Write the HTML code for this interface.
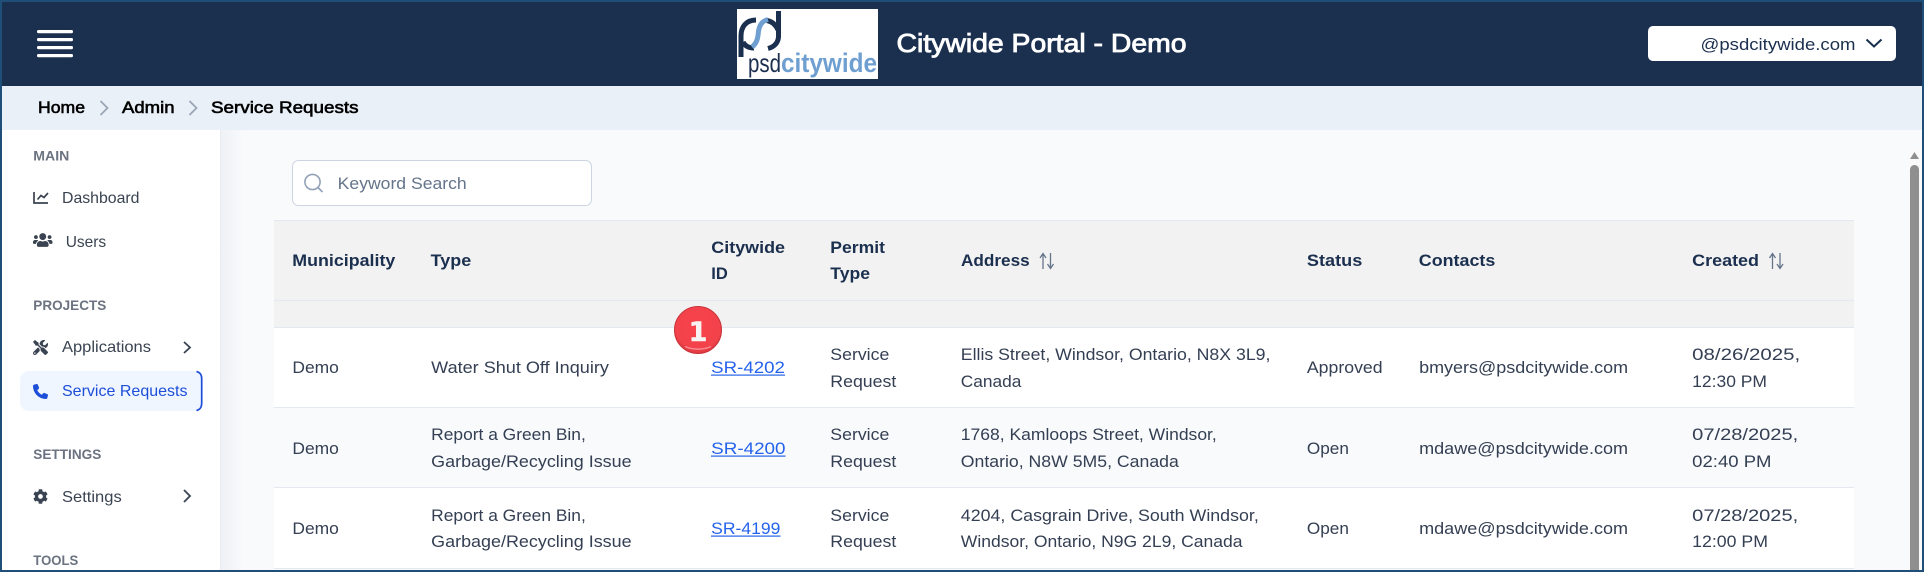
<!DOCTYPE html>
<html lang="en"><head><meta charset="utf-8"><title>Citywide Portal - Demo</title>
<style>
html,body{margin:0;padding:0;width:1924px;height:572px;overflow:hidden;background:#1f4e79}
svg{display:block;position:absolute;left:0;top:0}
text{font-family:"Liberation Sans",sans-serif;white-space:pre}
.c{font-size:17px;fill:#343f53}
.h{font-size:17px;font-weight:700;fill:#1b2f4e}
.l{font-size:17px;fill:#2563eb}
.n{font-size:16px;fill:#3a4351}
.s{font-size:14px;font-weight:700;fill:#6b7280}
.b{font-size:17px;fill:#000;stroke:#000;stroke-width:.6px}
</style></head><body>
<svg width="1924" height="572" viewBox="0 0 1924 572" xmlns="http://www.w3.org/2000/svg">
<defs>
<linearGradient id="sh" x1="0" x2="1" y1="0" y2="0"><stop offset="0" stop-color="#eef1f5"/><stop offset="1" stop-color="#f8fafc"/></linearGradient>
<radialGradient id="rd" cx=".5" cy=".42" r=".6"><stop offset="0" stop-color="#f9444c"/><stop offset=".8" stop-color="#f2424a"/><stop offset="1" stop-color="#d8363e"/></radialGradient>
</defs>
<!-- frame -->
<rect width="1924" height="572" fill="#1f4e79"/>
<!-- header -->
<rect x="2" y="2" width="1920" height="84" fill="#1b2f4e"/>
<g fill="#fff"><rect x="37" y="30" width="36" height="3.2" rx="1.5"/><rect x="37" y="38" width="36" height="3.2" rx="1.5"/><rect x="37" y="46" width="36" height="3.2" rx="1.5"/><rect x="37" y="54" width="36" height="3.2" rx="1.5"/></g>
<!-- logo -->
<rect x="737" y="9" width="141" height="70" fill="#fff"/>
<g fill="none" stroke-width="5">
<path d="M756 20C746 20 741 27 741 36V57" stroke="#1b2f4e"/>
<path d="M743 42C745 46 749 48 754 48" stroke="#1b2f4e"/>
<path d="M778.5 11V37C778 43 774 47 768 48.5" stroke="#1b2f4e"/>
<path d="M778 30C776 25 772 21.500 767 20.500" stroke="#1b2f4e"/>
<path d="M768 19.500C762 21 759.500 25 758.500 31C758 38 757 43 752 47" stroke="#6f9fd1"/>
</g>
<text x="748" y="72" textLength="33" lengthAdjust="spacingAndGlyphs" style="font-size:26px;fill:#1b2f4e">psd</text>
<text x="781" y="72" textLength="96" lengthAdjust="spacingAndGlyphs" style="font-size:27px;font-weight:700;fill:#6f9fd1">citywide</text>
<text x="896.5" y="52" textLength="290" lengthAdjust="spacingAndGlyphs" style="font-size:26px;fill:#fff;stroke:#fff;stroke-width:.85px">Citywide Portal - Demo</text>
<!-- user -->
<rect x="1648" y="26" width="248" height="35" rx="5" fill="#fff"/>
<text x="1700.5" y="50" textLength="155" lengthAdjust="spacingAndGlyphs" style="font-size:17px;fill:#1b2f4e">@psdcitywide.com</text>
<path d="M1866.5 39.5L1874 46.5L1881.5 39.5" fill="none" stroke="#1b2f4e" stroke-width="2"/>
<!-- breadcrumb -->
<rect x="2" y="86" width="1920" height="44" fill="#e9f0f8"/>
<text class="b" x="38" y="113" textLength="47" lengthAdjust="spacingAndGlyphs">Home</text>
<path d="M100.5 101L107.5 108L100.5 115" fill="none" stroke="#9aa5b5" stroke-width="1.8"/>
<text class="b" x="122" y="113" textLength="52.5" lengthAdjust="spacingAndGlyphs">Admin</text>
<path d="M189.5 101L196.5 108L189.5 115" fill="none" stroke="#9aa5b5" stroke-width="1.8"/>
<text class="b" x="211" y="113" textLength="147.5" lengthAdjust="spacingAndGlyphs">Service Requests</text>
<!-- main bg -->
<rect x="220" y="130" width="1702" height="440" fill="#f8fafc"/>
<rect x="221" y="130" width="22" height="440" fill="url(#sh)"/>
<!-- sidebar -->
<rect x="2" y="130" width="218" height="440" fill="#fff"/>
<rect x="220" y="130" width="1" height="440" fill="#e8ebf0"/>
<text class="s" x="33.3" y="160.5" textLength="36" lengthAdjust="spacingAndGlyphs">MAIN</text>
<path d="M34 192V203H48M37.5 199.5L41 195.5L44 197.5L48 193" fill="none" stroke="#3a4351" stroke-width="1.7"/>
<text class="n" x="62" y="203" textLength="77.5" lengthAdjust="spacingAndGlyphs">Dashboard</text>
<svg x="33" y="232" width="19.5" height="16" viewBox="0 0 640 512"><path fill="#3a4351" d="M96 224c35.3 0 64-28.7 64-64s-28.7-64-64-64-64 28.7-64 64 28.7 64 64 64zm448 0c35.3 0 64-28.7 64-64s-28.7-64-64-64-64 28.7-64 64 28.7 64 64 64zm32 32h-64c-17.6 0-33.5 7.1-45.1 18.6 40.3 22.1 68.9 62 75.1 109.4h66c17.7 0 32-14.3 32-32v-32c0-35.3-28.7-64-64-64zm-256 0c61.9 0 112-50.1 112-112S381.9 32 320 32 208 82.1 208 144s50.1 112 112 112zm76.8 32h-8.3c-20.8 10-43.9 16-68.5 16s-47.6-6-68.5-16h-8.3C179.6 288 128 339.6 128 403.2V432c0 26.5 21.5 48 48 48h288c26.5 0 48-21.5 48-48v-28.8c0-63.6-51.6-115.2-115.2-115.2zm-223.7-13.4C161.5 263.1 145.6 256 128 256H64c-35.3 0-64 28.7-64 64v32c0 17.7 14.3 32 32 32h65.9c6.3-47.4 34.9-87.3 75.2-109.4z"/></svg>
<text class="n" x="65.7" y="247" textLength="40.5" lengthAdjust="spacingAndGlyphs">Users</text>
<text class="s" x="33.3" y="310" textLength="73" lengthAdjust="spacingAndGlyphs">PROJECTS</text>
<svg x="33" y="340" width="15" height="15" viewBox="0 0 512 512"><path fill="#3a4351" d="M501.1 395.7L384 278.6c-23.1-23.1-57.6-27.6-85.4-13.9L192 158.1V96L64 0 0 64l96 128h62.1l106.6 106.6c-13.6 27.8-9.2 62.3 13.9 85.4l117.1 117.1c14.6 14.6 38.2 14.6 52.7 0l52.7-52.7c14.5-14.6 14.5-38.2 0-52.7zM331.7 225c28.3 0 54.9 11 74.9 31l19.4 19.4c15.8-6.9 30.8-16.5 43.8-29.5 37.1-37.1 49.7-89.3 37.9-136.7-2.2-9-13.5-12.1-20.1-5.5l-74.4 74.4-67.9-11.3L334 98.9l74.4-74.4c6.6-6.6 3.4-17.9-5.7-20.2-47.4-11.7-99.6.9-136.6 37.9-28.5 28.5-41.9 66.1-41.2 103.6l82.1 82.1c8.1-1.9 16.5-2.9 24.7-2.9zm-103.9 82l-56.7-56.7L18.7 402.8c-25 25-25 65.5 0 90.5s65.5 25 90.5 0l123.6-123.6c-7.6-19.9-9.9-41.6-5-62.7zM64 472c-13.2 0-24-10.8-24-24 0-13.3 10.7-24 24-24s24 10.7 24 24c0 13.2-10.7 24-24 24z"/></svg>
<text class="n" x="62" y="352" textLength="89" lengthAdjust="spacingAndGlyphs">Applications</text>
<path d="M184 342L190 347.5L184 353" fill="none" stroke="#3a4351" stroke-width="1.8"/>
<rect x="20" y="371" width="182" height="40" rx="9" fill="#eff6ff"/>
<path d="M196.5 371.5C200.5 372.5 201.7 375 201.7 379V403C201.7 407 200.5 409.5 196.5 410.5" fill="none" stroke="#1d4ed8" stroke-width="1.7"/>
<svg x="33" y="384" width="15" height="15" viewBox="0 0 512 512"><path fill="#1d4ed8" d="M164.9 24.6c-7.7-18.6-28-28.5-47.4-23.2l-88 24C12.1 30.2 0 46 0 64C0 311.4 200.6 512 448 512c18 0 33.8-12.1 38.6-29.5l24-88c5.3-19.4-4.6-39.7-23.2-47.4l-96-40c-16.3-6.8-35.2-2.1-46.3 11.6L304.7 368C234.3 334.7 177.3 277.7 144 207.3L193.3 167c13.7-11.2 18.4-30 11.6-46.3l-40-96z"/></svg>
<text x="62" y="396" textLength="125.5" lengthAdjust="spacingAndGlyphs" style="font-size:16px;fill:#1d4ed8">Service Requests</text>
<text class="s" x="33.3" y="459" textLength="68" lengthAdjust="spacingAndGlyphs">SETTINGS</text>
<svg x="33" y="489" width="15" height="15" viewBox="0 0 512 512"><path fill="#3a4351" d="M487.4 315.7l-42.6-24.6c4.3-23.2 4.3-47 0-70.2l42.6-24.6c4.9-2.8 7.1-8.6 5.5-14-11.1-35.6-30-67.8-54.7-94.6-3.8-4.1-10-5.1-14.8-2.3L380.8 110c-17.9-15.4-38.5-27.3-60.8-35.1V25.8c0-5.6-3.9-10.5-9.4-11.7-36.7-8.2-74.3-7.8-109.2 0-5.5 1.2-9.4 6.1-9.4 11.7V75c-22.2 7.9-42.8 19.8-60.8 35.1L88.7 85.5c-4.9-2.8-11-1.9-14.8 2.3-24.7 26.7-43.6 58.9-54.7 94.6-1.7 5.4.6 11.2 5.5 14L67.3 221c-4.3 23.2-4.3 47 0 70.2l-42.6 24.6c-4.9 2.8-7.1 8.6-5.5 14 11.1 35.6 30 67.8 54.7 94.6 3.8 4.1 10 5.1 14.8 2.3l42.6-24.6c17.9 15.4 38.5 27.3 60.8 35.1v49.2c0 5.6 3.9 10.5 9.4 11.7 36.7 8.2 74.3 7.8 109.2 0 5.5-1.2 9.4-6.1 9.4-11.7v-49.2c22.2-7.9 42.8-19.8 60.8-35.1l42.6 24.6c4.9 2.8 11 1.9 14.8-2.3 24.7-26.7 43.6-58.9 54.7-94.6 1.5-5.5-.7-11.3-5.6-14.1zM256 336c-44.1 0-80-35.9-80-80s35.9-80 80-80 80 35.9 80 80-35.9 80-80 80z"/></svg>
<text class="n" x="62" y="502" textLength="59.7" lengthAdjust="spacingAndGlyphs">Settings</text>
<path d="M184 490L190 496L184 502" fill="none" stroke="#3a4351" stroke-width="1.8"/>
<text class="s" x="33.3" y="565" textLength="45" lengthAdjust="spacingAndGlyphs">TOOLS</text>
<!-- search -->
<rect x="292.5" y="160.5" width="299" height="45" rx="6" fill="#fff" stroke="#cbd5e1"/>
<circle cx="312.5" cy="182" r="7.6" fill="none" stroke="#94a3b8" stroke-width="1.6"/>
<path d="M318 187.5L322.5 192" stroke="#94a3b8" stroke-width="1.8" fill="none"/>
<text x="337.7" y="189" textLength="129" lengthAdjust="spacingAndGlyphs" style="font-size:17px;fill:#64748b">Keyword Search</text>
<!-- table -->
<rect x="274" y="220" width="1580" height="107" fill="#f2f2f2"/>
<rect x="274" y="327" width="1580" height="80" fill="#fff"/>
<rect x="274" y="407" width="1580" height="80" fill="#f8fafc"/>
<rect x="274" y="487" width="1580" height="81" fill="#fff"/>
<g fill="#e4e9f1"><rect x="274" y="220" width="1580" height="1"/><rect x="274" y="300" width="1580" height="1"/><rect x="274" y="327" width="1580" height="1"/><rect x="274" y="407" width="1580" height="1"/><rect x="274" y="487" width="1580" height="1"/><rect x="274" y="568" width="1580" height="1"/></g>
<text class="h" x="292.3" y="266" textLength="103" lengthAdjust="spacingAndGlyphs">Municipality</text>
<text class="h" x="430.7" y="266" textLength="40.5" lengthAdjust="spacingAndGlyphs">Type</text>
<text class="h" x="711.3" y="253" textLength="73.7" lengthAdjust="spacingAndGlyphs">Citywide</text>
<text class="h" x="711.3" y="279" textLength="16.5" lengthAdjust="spacingAndGlyphs">ID</text>
<text class="h" x="830.3" y="253" textLength="54.7" lengthAdjust="spacingAndGlyphs">Permit</text>
<text class="h" x="830.3" y="279" textLength="39.7" lengthAdjust="spacingAndGlyphs">Type</text>
<text class="h" x="961" y="266" textLength="68.7" lengthAdjust="spacingAndGlyphs">Address</text>
<path d="M1043 269V254M1040 258L1043 253.5L1046 258M1050.5 253V268M1047.500 264L1050.5 268.5L1053.500 264" fill="none" stroke="#64748b" stroke-width="1.3"/>
<text class="h" x="1306.9" y="266" textLength="55.4" lengthAdjust="spacingAndGlyphs">Status</text>
<text class="h" x="1418.8" y="266" textLength="76.5" lengthAdjust="spacingAndGlyphs">Contacts</text>
<text class="h" x="1692.2" y="266" textLength="66.8" lengthAdjust="spacingAndGlyphs">Created</text>
<path d="M1772.5 269V254M1769.500 258L1772.5 253.5L1775.500 258M1780 253V268M1777 264L1780 268.5L1783 264" fill="none" stroke="#64748b" stroke-width="1.3"/>
<!-- row 1 -->
<text class="c" x="292.4" y="373" textLength="46.5" lengthAdjust="spacingAndGlyphs">Demo</text>
<text class="c" x="431.2" y="373" textLength="177.7" lengthAdjust="spacingAndGlyphs">Water Shut Off Inquiry</text>
<text class="l" x="711.2" y="373" textLength="73.7" lengthAdjust="spacingAndGlyphs">SR-4202</text><rect x="711" y="374.5" width="74" height="1.2" fill="#2563eb"/>
<text class="c" x="830.3" y="360" textLength="59" lengthAdjust="spacingAndGlyphs">Service</text>
<text class="c" x="830.3" y="387" textLength="66" lengthAdjust="spacingAndGlyphs">Request</text>
<text class="c" x="960.8" y="360" textLength="309.6" lengthAdjust="spacingAndGlyphs">Ellis Street, Windsor, Ontario, N8X 3L9,</text>
<text class="c" x="960.8" y="387" textLength="60.6" lengthAdjust="spacingAndGlyphs">Canada</text>
<text class="c" x="1306.9" y="373" textLength="75.7" lengthAdjust="spacingAndGlyphs">Approved</text>
<text class="c" x="1419.1" y="373" textLength="209" lengthAdjust="spacingAndGlyphs">bmyers@psdcitywide.com</text>
<text class="c" x="1692.2" y="360" textLength="108" lengthAdjust="spacingAndGlyphs">08/26/2025,</text>
<text class="c" x="1692.2" y="387" textLength="74.8" lengthAdjust="spacingAndGlyphs">12:30 PM</text>
<!-- row 2 -->
<text class="c" x="292.4" y="454" textLength="46.5" lengthAdjust="spacingAndGlyphs">Demo</text>
<text class="c" x="431.2" y="440" textLength="154.6" lengthAdjust="spacingAndGlyphs">Report a Green Bin,</text>
<text class="c" x="431.2" y="467" textLength="200.4" lengthAdjust="spacingAndGlyphs">Garbage/Recycling Issue</text>
<text class="l" x="711.2" y="454" textLength="74.3" lengthAdjust="spacingAndGlyphs">SR-4200</text><rect x="711" y="455.5" width="74.5" height="1.2" fill="#2563eb"/>
<text class="c" x="830.3" y="440" textLength="59" lengthAdjust="spacingAndGlyphs">Service</text>
<text class="c" x="830.3" y="467" textLength="66" lengthAdjust="spacingAndGlyphs">Request</text>
<text class="c" x="960.8" y="440" textLength="256" lengthAdjust="spacingAndGlyphs">1768, Kamloops Street, Windsor,</text>
<text class="c" x="960.8" y="467" textLength="218" lengthAdjust="spacingAndGlyphs">Ontario, N8W 5M5, Canada</text>
<text class="c" x="1306.9" y="454" textLength="42" lengthAdjust="spacingAndGlyphs">Open</text>
<text class="c" x="1419.1" y="454" textLength="209" lengthAdjust="spacingAndGlyphs">mdawe@psdcitywide.com</text>
<text class="c" x="1692.2" y="440" textLength="106" lengthAdjust="spacingAndGlyphs">07/28/2025,</text>
<text class="c" x="1692.2" y="467" textLength="79.3" lengthAdjust="spacingAndGlyphs">02:40 PM</text>
<!-- row 3 -->
<text class="c" x="292.4" y="534" textLength="46.5" lengthAdjust="spacingAndGlyphs">Demo</text>
<text class="c" x="431.2" y="521" textLength="154.6" lengthAdjust="spacingAndGlyphs">Report a Green Bin,</text>
<text class="c" x="431.2" y="547" textLength="200.4" lengthAdjust="spacingAndGlyphs">Garbage/Recycling Issue</text>
<text class="l" x="711.2" y="534" textLength="69.2" lengthAdjust="spacingAndGlyphs">SR-4199</text><rect x="711" y="535.5" width="69.5" height="1.2" fill="#2563eb"/>
<text class="c" x="830.3" y="521" textLength="59" lengthAdjust="spacingAndGlyphs">Service</text>
<text class="c" x="830.3" y="547" textLength="66" lengthAdjust="spacingAndGlyphs">Request</text>
<text class="c" x="960.8" y="521" textLength="298" lengthAdjust="spacingAndGlyphs">4204, Casgrain Drive, South Windsor,</text>
<text class="c" x="960.8" y="547" textLength="281.7" lengthAdjust="spacingAndGlyphs">Windsor, Ontario, N9G 2L9, Canada</text>
<text class="c" x="1306.9" y="534" textLength="42" lengthAdjust="spacingAndGlyphs">Open</text>
<text class="c" x="1419.1" y="534" textLength="209" lengthAdjust="spacingAndGlyphs">mdawe@psdcitywide.com</text>
<text class="c" x="1692.2" y="521" textLength="106" lengthAdjust="spacingAndGlyphs">07/28/2025,</text>
<text class="c" x="1692.2" y="547" textLength="75.8" lengthAdjust="spacingAndGlyphs">12:00 PM</text>
<!-- badge -->
<circle cx="698" cy="330" r="23.5" fill="url(#rd)" stroke="#c8323a" stroke-width="1"/>
<path d="M685 346.500C692 350 704 350 711 346.500" fill="none" stroke="#f98a90" stroke-width="1.4"/>
<text x="698" y="341" text-anchor="middle" style="font-family:'DejaVu Sans',sans-serif;font-size:27px;font-weight:700;fill:#f7f3f3;stroke:#f7f3f3;stroke-width:.5px">1</text>
<!-- scrollbar -->
<rect x="1907" y="147" width="15" height="423" fill="#fafafa"/>
<path d="M1914.5 152L1919 159H1910Z" fill="#8f8f8f"/>
<path d="M1910 170C1910 167 1912 165 1914.5 165C1917 165 1919 167 1919 170V570H1910Z" fill="#8f8f8f"/>
</svg>
</body></html>
